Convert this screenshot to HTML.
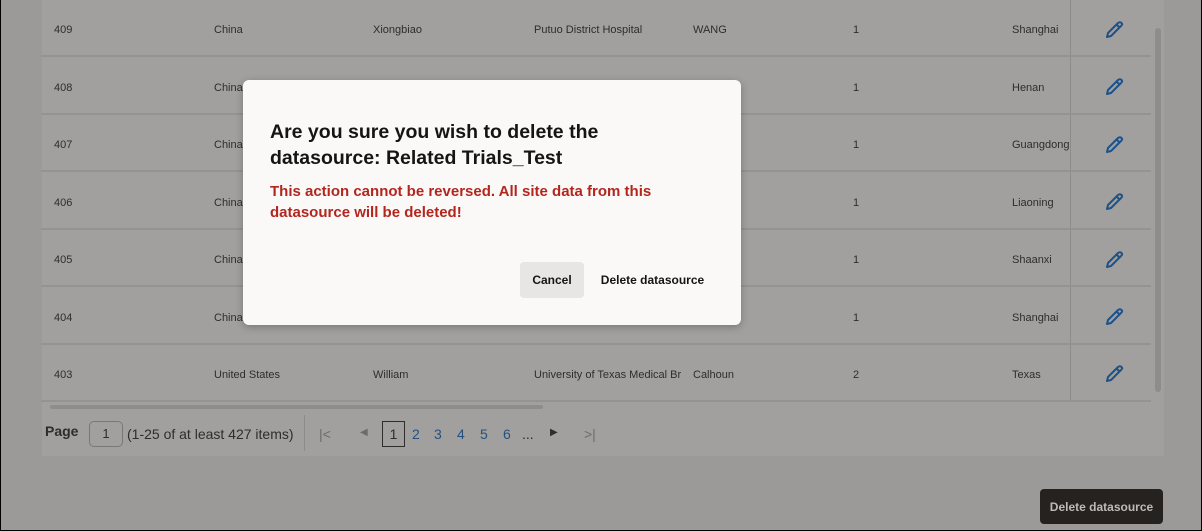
<!DOCTYPE html>
<html><head><meta charset="utf-8"><style>
*{margin:0;padding:0;box-sizing:border-box}
body{width:1202px;height:531px;overflow:hidden;background:#000;font-family:"Liberation Sans",sans-serif;position:relative}
.page{position:absolute;left:1px;top:0;width:1200px;height:530px;background:#9c9a98}
.tbl{position:absolute;left:41px;top:0;width:1122px;height:456px;background:#a2a09e}
.row{position:absolute;left:41px;width:1110px;height:57px;border-bottom:2px solid #959391}
.c{position:absolute;font-size:11px;color:#2e2d2c;top:24px;white-space:nowrap;overflow:hidden;max-width:148px}
.vd{position:absolute;left:1070px;top:0;width:1px;height:402px;background:#8e8c8a}
.ic{position:absolute;left:1104px}
.dlg{position:absolute;left:243px;top:80px;width:498px;height:245px;background:#faf9f8;border-radius:6px;box-shadow:0 2px 8px rgba(0,0,0,.25)}
.pg{position:absolute;font-size:14px;color:#2e2d2c}
.bl{color:#24507e}
</style></head><body>
<div class="page">
<div class="tbl"></div>
</div>
<div class="vd"></div>
<div style="position:absolute;left:1155px;top:28px;width:6px;height:364px;background:#8f8d8b;border-radius:3px"></div>
<div style="position:absolute;left:50px;top:405px;width:493px;height:4px;background:#8f8d8b;border-radius:2px"></div>

<div class="row" style="top:0"><span class="c" style="left:13px">409</span><span class="c" style="left:173px">China</span><span class="c" style="left:332px">Xiongbiao</span><span class="c" style="left:493px">Putuo District Hospital</span><span class="c" style="left:652px">WANG</span><span class="c" style="left:812px">1</span><span class="c" style="left:971px">Shanghai</span></div>
<div class="row" style="top:58px"><span class="c" style="left:13px">408</span><span class="c" style="left:173px">China</span><span class="c" style="left:812px">1</span><span class="c" style="left:971px">Henan</span></div>
<div class="row" style="top:115px"><span class="c" style="left:13px">407</span><span class="c" style="left:173px">China</span><span class="c" style="left:812px">1</span><span class="c" style="left:971px">Guangdong</span></div>
<div class="row" style="top:173px"><span class="c" style="left:13px">406</span><span class="c" style="left:173px">China</span><span class="c" style="left:812px">1</span><span class="c" style="left:971px">Liaoning</span></div>
<div class="row" style="top:230px"><span class="c" style="left:13px">405</span><span class="c" style="left:173px">China</span><span class="c" style="left:812px">1</span><span class="c" style="left:971px">Shaanxi</span></div>
<div class="row" style="top:288px"><span class="c" style="left:13px">404</span><span class="c" style="left:173px">China</span><span class="c" style="left:812px">1</span><span class="c" style="left:971px">Shanghai</span></div>
<div class="row" style="top:345px"><span class="c" style="left:13px">403</span><span class="c" style="left:173px">United States</span><span class="c" style="left:332px">William</span><span class="c" style="left:493px;max-width:147px">University of Texas Medical Bran</span><span class="c" style="left:652px">Calhoun</span><span class="c" style="left:812px">2</span><span class="c" style="left:971px">Texas</span></div>

<svg width="0" height="0" style="position:absolute"><defs><g id="pen"><path d="M3 17 L4 13 L14 3 Q16 1.5 17.5 3 Q19 4.5 17 6 L7 16 Z M12.5 4.5 L15.5 7.5" fill="none" stroke="#1d5289" stroke-width="2" stroke-linejoin="round"/></g></defs></svg>
<svg class="ic" style="top:20px" width="20" height="20"><use href="#pen"/></svg>
<svg class="ic" style="top:77px" width="20" height="20"><use href="#pen"/></svg>
<svg class="ic" style="top:135px" width="20" height="20"><use href="#pen"/></svg>
<svg class="ic" style="top:192px" width="20" height="20"><use href="#pen"/></svg>
<svg class="ic" style="top:250px" width="20" height="20"><use href="#pen"/></svg>
<svg class="ic" style="top:307px" width="20" height="20"><use href="#pen"/></svg>
<svg class="ic" style="top:364px" width="20" height="20"><use href="#pen"/></svg>

<div class="pg" style="left:45px;top:423px;font-weight:bold">Page</div>
<div style="position:absolute;left:89px;top:421px;width:34px;height:26px;border:1px solid #7a7876;border-radius:5px;font-size:13px;color:#2e2d2c;text-align:center;line-height:24px">1</div>
<div class="pg" style="left:127px;top:426px">(1-25 of at least 427 items)</div>
<div style="position:absolute;left:304px;top:415px;width:1px;height:36px;background:#8e8c8a"></div>
<div class="pg" style="left:319px;top:426px;color:#6e6c6a">|&lt;</div>
<div class="pg" style="left:360px;top:427px;color:#6e6c6a;font-size:10px">◀</div>
<div style="position:absolute;left:382px;top:421px;width:23px;height:26px;border:1px solid #2e2d2c;font-size:14px;text-align:center;line-height:24px;color:#2e2d2c">1</div>
<div class="pg bl" style="left:412px;top:426px">2</div>
<div class="pg bl" style="left:434px;top:426px">3</div>
<div class="pg bl" style="left:457px;top:426px">4</div>
<div class="pg bl" style="left:480px;top:426px">5</div>
<div class="pg bl" style="left:503px;top:426px">6</div>
<div class="pg" style="left:522px;top:426px">...</div>
<div class="pg" style="left:550px;top:427px;font-size:10px">▶</div>
<div class="pg" style="left:584px;top:426px;color:#6e6c6a">&gt;|</div>

<div style="position:absolute;left:1040px;top:489px;width:123px;height:35px;background:#252220;border-radius:4px;color:#bdbbb9;font-size:12px;font-weight:bold;text-align:center;line-height:36px">Delete datasource</div>

<div class="dlg">
<div style="position:absolute;left:27px;top:39px;width:365px;font-size:19.5px;font-weight:bold;line-height:26px;color:#161513">Are you sure you wish to delete the datasource: Related Trials_Test</div>
<div style="position:absolute;left:27px;top:101px;width:440px;font-size:15px;font-weight:bold;line-height:21px;color:#b3261e">This action cannot be reversed. All site data from this datasource will be deleted!</div>
<div style="position:absolute;left:277px;top:182px;width:64px;height:36px;background:#e8e6e4;border-radius:4px;font-size:12px;font-weight:bold;text-align:center;line-height:36px;color:#161513">Cancel</div>
<div style="position:absolute;left:348px;top:182px;width:123px;height:36px;font-size:12px;font-weight:bold;text-align:center;line-height:36px;color:#161513">Delete datasource</div>
</div>
</body></html>
